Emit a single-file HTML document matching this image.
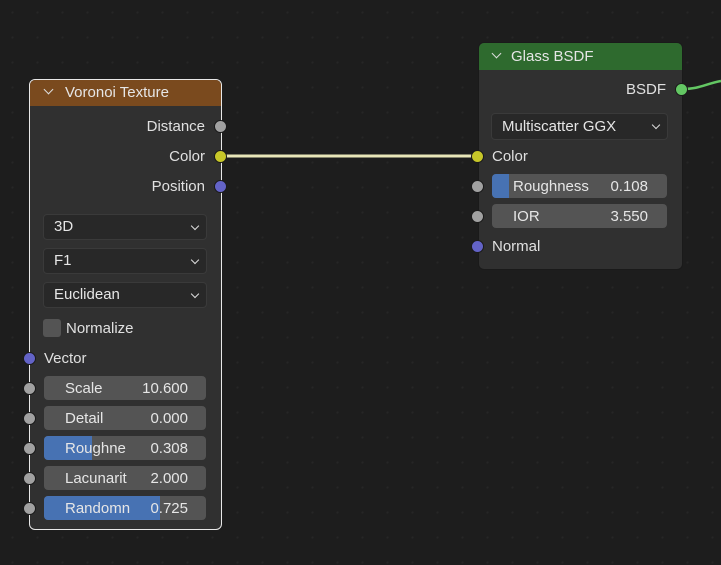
<!DOCTYPE html>
<html><head><style>
*{margin:0;padding:0;box-sizing:border-box}
body{width:721px;height:565px;overflow:hidden;background-color:#1d1d1d;background-image:radial-gradient(#262626 1px,transparent 1.2px);background-size:25px 25px;font-family:"Liberation Sans",sans-serif;font-size:15px;color:#e0e0e0;position:relative}
.a{position:absolute}
.node{position:absolute;background:#303030;border-radius:6px;overflow:hidden}
.hdr{position:absolute;left:0;right:0;top:0;height:26px;padding-left:34px;line-height:27px;color:#e6e6e6}
.chev{position:absolute;left:16px;top:7px;width:7px;height:7px;border-right:1.5px solid #ddd;border-bottom:1.5px solid #ddd;transform:rotate(45deg)}
.dd{position:absolute;background:#282828;border:1px solid #3a3a3a;border-radius:4px;padding-left:10px;line-height:24px;color:#e6e6e6}
.dd:after{content:"";position:absolute;right:8px;top:8px;width:5px;height:5px;border-right:1.5px solid #ddd;border-bottom:1.5px solid #ddd;transform:rotate(45deg)}
.sl{position:absolute;background:#545454;border-radius:4px;overflow:hidden;height:24px;line-height:25px;color:#e6e6e6}
.sl .f{position:absolute;left:0;top:0;bottom:0;background:#4772b3}
.sl .l{position:absolute;left:21px}
.sl .v{position:absolute;right:18px}
.s{position:absolute;width:13px;height:13px;border-radius:50%;border:1px solid #1a1a1a}
.g{background:#a1a1a1}.y{background:#c7c729}.b{background:#6363c7}.gr{background:#63c763}
.t{position:absolute;color:#e0e0e0;line-height:18px}
</style></head><body>
<svg class="a" style="left:0;top:0" width="721" height="565">
<line x1="221" y1="156" x2="478" y2="156" stroke="#e8e6b8" stroke-width="3"/>
<path d="M682 89 C700 89 705 84 721 81" stroke="#63c763" stroke-width="2.5" fill="none"/>
</svg>

<div class="node" style="left:29px;top:79px;width:193px;height:451px;border:1.5px solid #e8e8e8">
<div class="hdr" style="background:#7a4a1e;left:-1px;top:-1px;right:-1px;height:27px;padding-left:36px"><div class="chev"></div>Voronoi Texture</div>
</div>
<div class="t" style="right:516px;top:118px">Distance</div>
<div class="t" style="right:516px;top:148px">Color</div>
<div class="t" style="right:516px;top:178px">Position</div>
<div class="s g" style="left:214px;top:120px"></div>
<div class="s y" style="left:214px;top:150px"></div>
<div class="s b" style="left:214px;top:180px"></div>
<div class="dd" style="left:43px;top:214px;width:164px;height:26px">3D</div>
<div class="dd" style="left:43px;top:248px;width:164px;height:26px">F1</div>
<div class="dd" style="left:43px;top:282px;width:164px;height:26px">Euclidean</div>
<div class="a" style="left:43px;top:319px;width:18px;height:18px;background:#545454;border-radius:3px"></div>
<div class="t" style="left:66px;top:320px">Normalize</div>
<div class="s b" style="left:23px;top:352px"></div>
<div class="t" style="left:44px;top:350px">Vector</div>
<div class="sl" style="left:44px;top:376px;width:162px"><span class="l">Scale</span><span class="v">10.600</span></div>
<div class="sl" style="left:44px;top:406px;width:162px"><span class="l">Detail</span><span class="v">0.000</span></div>
<div class="sl" style="left:44px;top:436px;width:162px"><div class="f" style="width:48px"></div><span class="l">Roughne</span><span class="v">0.308</span></div>
<div class="sl" style="left:44px;top:466px;width:162px"><span class="l">Lacunarit</span><span class="v">2.000</span></div>
<div class="sl" style="left:44px;top:496px;width:162px"><div class="f" style="width:116px"></div><span class="l">Randomn</span><span class="v">0.725</span></div>
<div class="s g" style="left:23px;top:382px"></div>
<div class="s g" style="left:23px;top:412px"></div>
<div class="s g" style="left:23px;top:442px"></div>
<div class="s g" style="left:23px;top:472px"></div>
<div class="s g" style="left:23px;top:502px"></div>

<div class="node" style="left:478px;top:42px;width:205px;height:228px;border:1px solid #1a1a1a">
<div class="hdr" style="background:#2e6a2e;height:27px;padding-left:32px"><div class="chev" style="left:14px"></div>Glass BSDF</div>
</div>
<div class="t" style="right:55px;top:81px">BSDF</div>
<div class="s gr" style="left:675px;top:83px"></div>
<div class="dd" style="left:491px;top:113px;width:177px;height:27px;line-height:25px">Multiscatter GGX</div>
<div class="t" style="left:492px;top:148px">Color</div>
<div class="sl" style="left:492px;top:174px;width:175px"><div class="f" style="width:17px"></div><span class="l">Roughness</span><span class="v" style="right:19px">0.108</span></div>
<div class="sl" style="left:492px;top:204px;width:175px"><span class="l">IOR</span><span class="v" style="right:19px">3.550</span></div>
<div class="t" style="left:492px;top:238px">Normal</div>
<div class="s y" style="left:471px;top:150px"></div>
<div class="s g" style="left:471px;top:180px"></div>
<div class="s g" style="left:471px;top:210px"></div>
<div class="s b" style="left:471px;top:240px"></div>
</body></html>
